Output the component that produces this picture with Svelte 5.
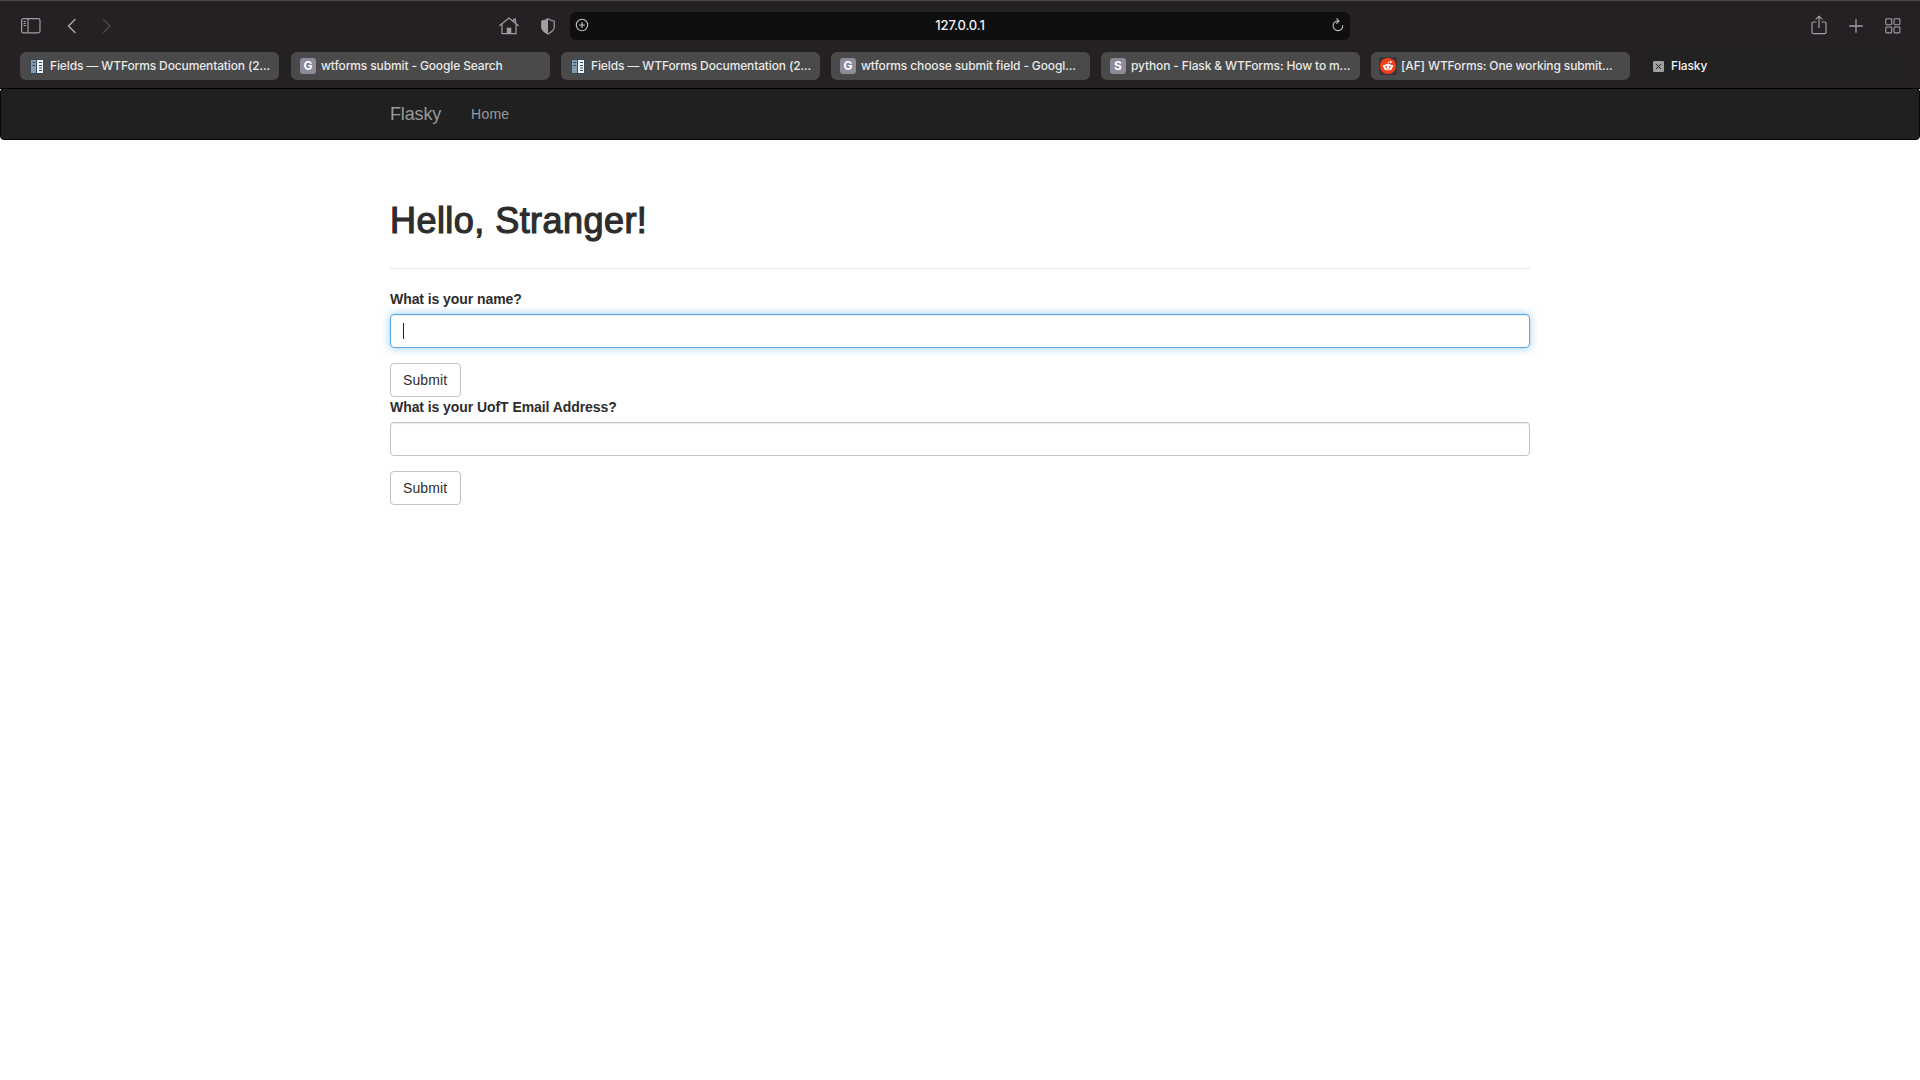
<script>
  const tabs = [
    { icon: 'docs', title: 'Fields — WTForms Documentation (2...' },
    { icon: 'G', title: 'wtforms submit - Google Search' },
    { icon: 'docs', title: 'Fields — WTForms Documentation (2...' },
    { icon: 'G', title: 'wtforms choose submit field - Googl...' },
    { icon: 'S', title: 'python - Flask & WTForms: How to m...' },
    { icon: 'reddit', title: '[AF] WTForms: One working submit...' },
    { icon: 'close', title: 'Flasky', active: true }
  ];
</script>

<header class="browser">
  <div class="toolbar">
    <div class="side left">
      <svg class="sidebar" width="20" height="16" viewBox="0 0 20 16" fill="none" stroke="#a39da2">
        <rect x=".6" y=".6" width="18.4" height="14.2" rx="1.8" stroke-width="1.2" />
        <path d="M7 .6v14.2" stroke-width="1.2" />
        <path d="M2.5 3.5h2.5M2.5 5.5h2.5M2.5 7.5h2.5" />
      </svg>
      <svg class="back" width="10" height="16" viewBox="0 0 10 16" fill="none" stroke="#aaa5a9" stroke-width="1.5" stroke-linecap="round" stroke-linejoin="round">
        <path d="M8 1.5 1.5 8 8 14.5" />
      </svg>
      <svg class="forward" width="10" height="16" viewBox="0 0 10 16" fill="none" stroke="#4b454a" stroke-width="1.5" stroke-linecap="round" stroke-linejoin="round">
        <path d="M1.5 1.5 8 8l-6.500 6.500" />
      </svg>
      <span class="grow"></span>
      <svg class="home" width="20" height="18" viewBox="0 0 20 18" fill="none" stroke="#a39da2" stroke-width="1.2" stroke-linecap="round" stroke-linejoin="round">
        <path d="M.8 8.500 10 1l9.200 7.500M3 7v9.700h14V7M14.800 4.500V2h1.700v3.900" />
        <path d="M7.700 16.700v-6h4.600v6z" fill="#a39da2" stroke="none" />
      </svg>
      <svg class="shield" width="14" height="17" viewBox="0 0 14 17">
        <path d="M7 .8C5 2.300 3 2.800.8 3v6.600C.8 12.800 4.500 14.700 7 16c2.500-1.300 6.200-3.200 6.200-6.400V3C11 2.800 9 2.300 7 .8z" fill="none" stroke="#a39da2" stroke-width="1.2" />
        <path d="M7 .8C5 2.300 3 2.800.8 3v6.600C.8 12.800 4.500 14.700 7 16z" fill="#a39da2" />
      </svg>
    </div>
    <div class="address">
      <svg width="14" height="14" viewBox="0 0 14 14" fill="none" stroke="#c4c4c4" stroke-linecap="round">
        <circle cx="7" cy="7" r="5.700" stroke-width="1.100" />
        <path d="M7 4.500v5M4.500 7h5" stroke-width="1.200" />
      </svg>
      <span class="url">127.0.0.1</span>
      <svg width="12" height="14" viewBox="0 0 12 14" fill="none" stroke="#bdbdbd" stroke-width="1.100" stroke-linecap="round" stroke-linejoin="round">
        <path d="M10.700 7.500A4.800 4.800 0 1 1 6.300 3M4.700.8 7 3 4.700 5.300" />
      </svg>
    </div>
    <div class="side right">
      <svg class="share" width="16" height="20" viewBox="0 0 16 20" fill="none" stroke="#a39da2" stroke-width="1.200" stroke-linecap="round" stroke-linejoin="round">
        <path d="M5 7H2.400Q1 7 1 8.400v8.800q0 1.400 1.400 1.400h11.200q1.400 0 1.400-1.400V8.400Q15 7 13.600 7H11M8 12.500V1.400M5 4.200l3-3 3 3" />
      </svg>
      <svg class="plus" width="14" height="14" viewBox="0 0 14 14" stroke="#a39da2" stroke-width="1.300" stroke-linecap="round">
        <path d="M7 .7v12.600M.7 7h12.600" />
      </svg>
      <svg class="overview" width="16" height="16" viewBox="0 0 16 16" fill="none" stroke="#a39da2" stroke-width="1.100">
        <rect x=".8" y=".8" width="5.900" height="5.900" rx=".9" />
        <rect x="9" y=".8" width="5.900" height="5.900" rx=".9" />
        <rect x=".8" y="9" width="5.900" height="5.900" rx=".9" />
        <rect x="9" y="9" width="5.900" height="5.900" rx=".9" />
      </svg>
    </div>
  </div>

  <div class="tabs">
    {#each tabs as tab}
      <div class="tab" class:active={tab.active}>
        {#if tab.icon === 'docs'}
          <svg class="docs" width="14" height="15" viewBox="0 0 14 15">
            <rect width="14" height="15" fill="#34495a" />
            <rect x="1" y="1" width="5" height="13" fill="#819caf" />
            <rect x="7" y="1" width="6" height="13" fill="#eef2f4" />
            <path d="M2.500 3.500h2.500M2.500 6.500h2.500M9 3.500h3M9 6.500h3M9 9h3M9 11.500h3" stroke="#2f4658" stroke-width="1" />
          </svg>
        {:else if tab.icon === 'reddit'}
          <span class="reddit">
            <svg width="16" height="16" viewBox="0 0 16 16">
              <circle cx="8" cy="8" r="8" fill="#fb3c1a" />
              <ellipse cx="8" cy="9.300" rx="4.300" ry="3.300" fill="#fff" />
              <circle cx="3.900" cy="8" r="1.100" fill="#fff" />
              <circle cx="12.100" cy="8" r="1.100" fill="#fff" />
              <circle cx="10.800" cy="4" r="1" fill="#fff" />
              <path d="M8 6.500 8.500 4l2 .2" fill="none" stroke="#fff" stroke-width=".7" />
              <circle cx="6.300" cy="8.800" r=".9" fill="#fb3c1a" />
              <circle cx="9.700" cy="8.800" r=".9" fill="#fb3c1a" />
              <path d="M6.300 10.900q1.700 1 3.400 0" fill="none" stroke="#fb3c1a" stroke-width=".7" />
            </svg>
          </span>
        {:else if tab.icon === 'close'}
          <svg class="close" width="11" height="11" viewBox="0 0 11 11">
            <rect width="11" height="11" rx="1.300" fill="#a0a0a0" />
            <path d="m3.100 3.100 4.800 4.800m0-4.800L3.100 7.900" stroke="#222" stroke-width="1" />
          </svg>
        {:else}
          <span class="letter">{tab.icon}</span>
        {/if}
        <span class="title">{tab.title}</span>
      </div>
    {/each}
  </div>
</header>

<nav class="navbar">
  <div class="container nav-inner">
    <span class="brand">Flasky</span>
    <span class="link">Home</span>
  </div>
</nav>

<main class="container">
  <div class="page-header"><h1>Hello, Stranger!</h1></div>
  <form>
    <label for="name">What is your name?</label>
    <div class="field focused" id="name"><span class="caret"></span></div>
    <button type="button">Submit</button>
  </form>
  <form>
    <label for="email">What is your UofT Email Address?</label>
    <div class="field" id="email"></div>
    <button type="button">Submit</button>
  </form>
</main>

<style>
  :global(body) {
    margin: 0;
    background: #fff;
    overflow: hidden;
  }
  :global(#app) {
    font: 14px/20px "Liberation Sans", Arial, sans-serif;
    color: #2d2d2d;
  }
  :global(#app *) { box-sizing: border-box; }
  svg { display: block; flex: none; }

  .browser {
    position: relative;
    z-index: 1;
    height: 89px;
    padding: 11px 20px 0;
    background: #242024;
    border-top: 1px solid #4b494c;
    border-bottom: 1px solid #000;
    font-family: Inter, sans-serif;
  }
  .toolbar {
    display: grid;
    grid-template-columns: minmax(0, 1fr) 780px minmax(0, 1fr);
    height: 28px;
    align-items: center;
  }
  .side { display: flex; align-items: center; }
  .left { padding: 0 15px 0 1px; }
  .right { justify-content: flex-end; }
  .back { margin-left: 26px; }
  .forward { margin-left: 25px; }
  .grow { flex: 1; }
  .shield { margin-left: 22px; }
  .share { margin-bottom: 2px; }
  .plus { margin: 0 0 1px 22px; }
  .overview { margin: 0 -.5px 1px 21.500px; }
  .address {
    display: flex;
    align-items: center;
    height: 28px;
    padding: 0 6px 3px 5px;
    border-radius: 6px;
    background: #0f0f0f;
    color: #f2f2f2;
    font-size: 13px;
    font-weight: 500;
  }
  .url { flex: 1; padding-right: 1px; text-align: center; letter-spacing: -.15px; }

  .tabs {
    display: grid;
    grid-template-columns: 260px repeat(6, 259px);
    gap: 11px;
    margin-top: 12px;
  }
  .tab {
    display: flex;
    align-items: center;
    height: 28px;
    width: 259px;
    padding-left: 10px;
    border-radius: 6px;
    background: #4a4a4a;
    color: #e9e9e9;
    font-size: 12px;
    font-weight: 500;
    white-space: nowrap;
  }
  .tab:nth-child(n + 2) { padding-left: 9px; }
  .active { background: #222; color: #f4f4f4; }
  .title { margin-left: 5px; letter-spacing: -.13px; }
  .docs { margin: 0 1px 0 0; }
  .tab:nth-child(3) .docs { margin-left: 1px; }
  .letter {
    width: 16px;
    height: 16px;
    border-radius: 3px;
    background: #8b8b9a;
    color: #fff;
    font-size: 12px;
    font-weight: 700;
    line-height: 16px;
    text-align: center;
  }
  .reddit {
    padding: 1px;
    margin: 0 -1px;
    border-radius: 2px;
    background: #383838;
  }
  .close { margin: 0 2px 0 3px; }

  .navbar {
    height: 52px;
    margin-top: -1px;
    border: 1px solid #080808;
    border-radius: 4px;
    background: #202020;
    color: #999;
  }
  .container { width: 1140px; margin: 0 auto; }
  .nav-inner { display: flex; align-items: center; height: 50px; }
  .brand { font-size: 18px; letter-spacing: -.15px; }
  .link { margin-left: 30px; letter-spacing: .2px; }

  main { padding-top: 60px; }
  .page-header {
    height: 69px;
    margin-bottom: 20px;
    padding-top: 1px;
    border-bottom: 1px solid #e8e8e8;
  }
  h1 {
    margin: 0;
    font-size: 36px;
    font-weight: 400;
    line-height: 40px;
    letter-spacing: .45px;
    -webkit-text-stroke: 1.200px #2d2d2d;
  }
  label { display: block; margin-bottom: 5px; font-weight: 700; letter-spacing: -.07px; }
  .field {
    display: flex;
    align-items: center;
    height: 34px;
    margin-bottom: 15px;
    padding: 0 12px;
    border: 1px solid #c3c3c3;
    border-radius: 4px;
    box-shadow: inset 0 1px 1px rgba(0, 0, 0, .075);
  }
  .focused {
    border-color: #56a5e4;
    box-shadow: inset 0 1px 1px rgba(0, 0, 0, .075), 0 0 8px rgba(86, 165, 228, .6);
  }
  .caret { width: 1px; height: 16px; background: #222; }
  button {
    display: block;
    width: 71px;
    height: 34px;
    padding: 0 12px;
    border: 1px solid #c3c3c3;
    border-radius: 4px;
    background: #fff;
    color: #2d2d2d;
    font: inherit;
    letter-spacing: .1px;
    text-align: left;
  }
</style>
